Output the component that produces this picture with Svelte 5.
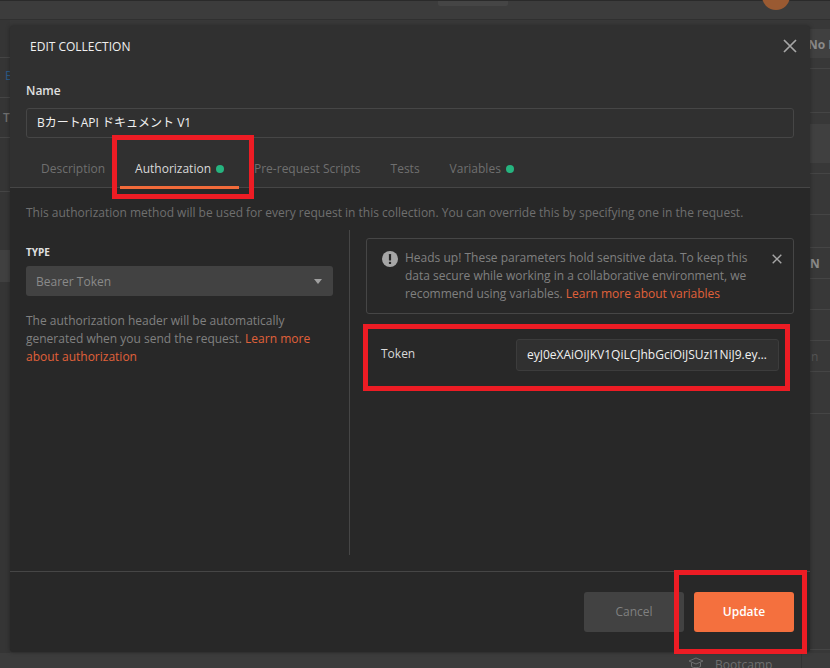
<script>
    const tabs = [
        { name: 'Description', dot: false },
        { name: 'Authorization', dot: true, active: true },
        { name: 'Pre-request Scripts', dot: false },
        { name: 'Tests', dot: false },
        { name: 'Variables', dot: true }
    ];

    // rows of the dimmed app that peek out beside the modal
    const leftRows = [
        { h: 38, line: true },
        { h: 40, line: true, text: 'B', cls: 'blue' },
        { h: 40, line: true, text: 'T', cls: 'tee' },
        { h: 54, line: true },
        { h: 58 },
        { h: 32, light: true }
    ];
    const rightRows = [
        { h: 9 },
        { h: 29, light: true, text: 'No E', cls: 'bold noe' },
        { h: 11, line: true },
        { h: 44, line: true },
        { h: 11 },
        { h: 39, light: true },
        { h: 11, line: true },
        { h: 41, line: true },
        { h: 33, line: true },
        { h: 31, line: true, text: 'N', cls: 'bold' },
        { h: 31, line: true },
        { h: 31, line: true },
        { h: 31, line: true, text: 'n', cls: 'dim' },
        { h: 42, line: true }
    ];
</script>

<div class="page">
    <!-- dimmed app behind the modal -->
    <div class="topbar">
        <div class="top-pill"></div>
        <div class="avatar"></div>
    </div>
    <div class="backdrop">
        <div class="strip left-strip">
            {#each leftRows as row}
                <div class="row {row.cls || ''}" class:line={row.line} class:light={row.light} style="height: {row.h}px">{row.text || ''}</div>
            {/each}
        </div>
        <div class="strip right-strip">
            {#each rightRows as row}
                <div class="row {row.cls || ''}" class:line={row.line} class:light={row.light} style="height: {row.h}px">{row.text || ''}</div>
            {/each}
            <div class="row line rest"></div>
        </div>
    </div>
    <div class="statusbar">
        <svg width="16" height="13" viewBox="0 0 16 13" fill="none" stroke="#6e6e6e" stroke-width="1">
            <path d="M8 1L1 4l7 3 7-3zM3.500 5.500v4c1.500 1.600 7.500 1.600 9 0v-4"/>
        </svg>
        <span>Bootcamp</span>
        <i></i>
    </div>

    <div class="modal">
        <header class="modal-header">
            <h1>EDIT COLLECTION</h1>
            <button class="close" aria-label="Close">
                <svg width="14" height="14" viewBox="0 0 14 14" fill="none" stroke="#a6a6a6" stroke-width="1.7">
                    <path d="M1 1l12 12M13 1L1 13"/>
                </svg>
            </button>
        </header>

        <div class="name-field">
            <label for="name">Name</label>
            <input id="name" value="BカートAPI ドキュメント V1" />
        </div>

        <nav class="tabs">
            {#each tabs as tab}
                <div class="tab" class:active={tab.active}>
                    {tab.name}
                    {#if tab.dot}<span class="dot"></span>{/if}
                </div>
            {/each}
        </nav>

        <div class="body">
            <p class="intro">This authorization method will be used for every request in this collection. You can override this by specifying one in the request.</p>
            <div class="columns">
                <div class="left">
                    <div class="type-label">TYPE</div>
                    <div class="select">
                        <span>Bearer Token</span>
                        <span class="caret"></span>
                    </div>
                    <p class="help">The authorization header will be automatically generated when you send the request. <a href="#auth">Learn more about authorization</a></p>
                </div>
                <div class="right">
                    <div class="alert">
                        <svg class="alert-icon" width="16" height="16" viewBox="0 0 16 16">
                            <circle cx="8" cy="8" r="8" fill="#a6a6a6"/>
                            <rect x="6.900" y="3" width="2.200" height="6.600" rx="0.600" fill="#282828"/>
                            <rect x="6.900" y="10.800" width="2.200" height="2.200" rx="0.600" fill="#282828"/>
                        </svg>
                        <p>Heads up! These parameters hold sensitive data. To keep this data secure while working in a collaborative environment, we recommend using variables. <a href="#vars">Learn more about variables</a></p>
                        <svg class="alert-close" width="10" height="10" viewBox="0 0 10 10" fill="none" stroke="#a6a6a6" stroke-width="1.400">
                            <path d="M.7.7l8.600 8.600M9.300.7L.7 9.300"/>
                        </svg>
                    </div>
                    <div class="token-row">
                        <span class="token-label">Token</span>
                        <div class="token-input">eyJ0eXAiOiJKV1QiLCJhbGciOiJSUzI1NiJ9.eyJhdWQiOiIxIiwianRpIjoi</div>
                    </div>
                </div>
            </div>
        </div>

        <footer class="modal-footer">
            <button class="btn cancel">Cancel</button>
            <button class="btn update">Update</button>
        </footer>
    </div>

    <!-- red annotation boxes -->
    <div class="mark mark-auth"></div>
    <div class="mark mark-token"></div>
    <div class="mark mark-update"></div>
</div>

<style>
    :global(body) {
        margin: 0;
        background: #3a3a3a;
        font-family: 'Open Sans', sans-serif;
        overflow: hidden;
    }

    .page {
        position: relative;
        display: flex;
        flex-direction: column;
        width: 830px;
        height: 668px;
        overflow: hidden;
        background: #383838;
    }

    .topbar {
        position: relative;
        flex: none;
        box-sizing: border-box;
        height: 20px;
        border-top: 1px solid #2a2a2a;
        border-bottom: 1px solid #303030;
        background: #3c3c3c;
    }

    .top-pill {
        position: absolute;
        left: 438px;
        top: 0;
        width: 70px;
        height: 5px;
        border-radius: 0 0 2px 2px;
        background: #454545;
    }

    .avatar {
        position: absolute;
        left: 762px;
        top: -19px;
        width: 28px;
        height: 28px;
        border-radius: 50%;
        background: #9a5a32;
    }

    .backdrop {
        flex: 1;
        display: flex;
        justify-content: space-between;
        min-height: 0;
    }

    .strip {
        display: flex;
        flex-direction: column;
        width: 20px;
        overflow: hidden;
    }

    .left-strip {
        width: 10px;
        background: #353535;
    }

    .row {
        flex: none;
        box-sizing: border-box;
        display: flex;
        align-items: center;
        white-space: nowrap;
        font-size: 12px;
        color: #6e6e6e;
    }

    .row.line { border-bottom: 1px solid #454545; }
    .row.light { background: #404040; }
    .row.rest { flex: 1; margin-bottom: 3px; }
    .row.bold { font-weight: 700; color: #8a8a8a; }
    .row.noe { margin-left: -2px; padding-top: 2px; }
    .row.dim { color: #555; padding-left: 1px; }
    .row.blue { color: #2b5a85; padding-left: 5px; padding-bottom: 4px; }
    .row.tee { color: #6e6e6e; padding-left: 3px; font-weight: 600; }

    .statusbar {
        flex: none;
        display: flex;
        align-items: flex-start;
        box-sizing: border-box;
        height: 15px;
        padding: 4px 0 0 688px;
        overflow: hidden;
        background: #3c3c3c;
        color: #6e6e6e;
        font-size: 12px;
        line-height: 16px;
    }

    .statusbar span {
        margin-left: 11px;
    }

    .statusbar i {
        margin-left: 29px;
        margin-top: -4px;
        width: 1px;
        height: 15px;
        background: #333;
    }

    .modal {
        position: absolute;
        left: 10px;
        top: 26px;
        width: 800px;
        height: 626px;
        display: flex;
        flex-direction: column;
        overflow: hidden;
        border-radius: 3px;
        background: #303030;
        box-shadow: 0 0 4px rgba(0, 0, 0, 0.35);
    }

    .modal-header {
        display: flex;
        align-items: center;
        justify-content: space-between;
        height: 40px;
        padding: 0 13px 0 20px;
    }

    h1 {
        margin: 0;
        font-size: 12px;
        font-weight: 500;
        color: #f0f0f0;
    }

    .close {
        display: flex;
        padding: 0;
        border: none;
        background: none;
        margin-bottom: 1px;
    }

    .name-field {
        display: flex;
        flex-direction: column;
        padding: 17px 16px 0;
    }

    label {
        font-size: 12px;
        font-weight: 600;
        line-height: 16px;
        color: #e0e0e0;
        margin-bottom: 9px;
    }

    input {
        box-sizing: border-box;
        height: 30px;
        padding: 0 10px 2px;
        border: 1px solid #464646;
        border-radius: 3px;
        background: #303030;
        color: #f0f0f0;
        font-family: 'Open Sans', 'Noto Sans CJK JP', sans-serif;
        font-size: 12px;
        outline: none;
    }

    .tabs {
        display: flex;
        gap: 30px;
        height: 50px;
        padding-left: 31px;
        border-bottom: 1px solid #464646;
        box-sizing: border-box;
    }

    .tab {
        position: relative;
        display: flex;
        align-items: center;
        gap: 5px;
        padding-top: 12px;
        height: 37px;
        font-size: 12px;
        color: #6f6f6f;
    }

    .tab.active {
        color: #d9d9d9;
        font-weight: 500;
    }

    .tab.active::after {
        content: '';
        position: absolute;
        left: -15px;
        right: -15px;
        bottom: -2px;
        height: 3px;
        background: #f26b3a;
    }

    .dot {
        width: 8px;
        height: 8px;
        border-radius: 50%;
        background: #26b47f;
    }

    .body {
        flex: 1;
        display: flex;
        flex-direction: column;
        min-height: 0;
        background: #282828;
    }

    .intro {
        margin: 0;
        padding: 16px 16px 0;
        font-size: 12px;
        line-height: 18px;
        color: #6f6f6f;
        white-space: nowrap;
    }

    .columns {
        display: flex;
        margin-top: 8px;
        height: 325px;
    }

    .left {
        box-sizing: border-box;
        width: 340px;
        padding: 15px 16px 0;
        border-right: 1px solid #464646;
    }

    .type-label {
        font-size: 10px;
        font-weight: 700;
        line-height: 14px;
        color: #e0e0e0;
        margin-bottom: 7px;
    }

    .select {
        display: flex;
        align-items: center;
        justify-content: space-between;
        box-sizing: border-box;
        height: 30px;
        width: 307px;
        padding: 0 10px;
        border-radius: 3px;
        background: #424242;
        color: #8a8a8a;
        font-size: 12px;
    }

    .caret {
        width: 0;
        height: 0;
        margin-right: 1px;
        border-left: 4px solid transparent;
        border-right: 4px solid transparent;
        border-top: 5px solid #a0a0a0;
    }

    .help {
        margin: 16px 0 0;
        width: 300px;
        font-size: 12px;
        line-height: 18px;
        color: #808080;
    }

    a {
        color: #e0613a;
        text-decoration: none;
    }

    .right {
        flex: 1;
        padding: 8px 16px 0;
    }

    .alert {
        display: flex;
        align-items: flex-start;
        box-sizing: border-box;
        height: 76px;
        padding: 10px 11px 0 15px;
        border: 1px solid #464646;
        border-radius: 3px;
    }

    .alert-icon {
        flex: none;
        margin: 2px 7px 0 0;
    }

    .alert p {
        flex: 1;
        margin: 0;
        font-size: 12px;
        line-height: 18px;
        color: #808080;
    }

    .alert-close {
        flex: none;
        margin-top: 5px;
        margin-left: 10px;
    }

    .token-row {
        display: flex;
        align-items: center;
        justify-content: space-between;
        margin-top: 25px;
        padding: 0 15px;
    }

    .token-label {
        font-size: 12px;
        font-weight: 500;
        color: #d9d9d9;
        margin-bottom: 3px;
    }

    .token-input {
        box-sizing: border-box;
        width: 263px;
        height: 32px;
        padding: 0 10px;
        border: 1px solid #3c3c3c;
        border-radius: 3px;
        background: #303030;
        color: #f0f0f0;
        font-size: 12px;
        line-height: 30px;
        white-space: nowrap;
        overflow: hidden;
        text-overflow: ellipsis;
    }

    .modal-footer {
        display: flex;
        justify-content: flex-end;
        gap: 10px;
        box-sizing: border-box;
        height: 81px;
        padding: 20px 16px 0;
        border-top: 1px solid #464646;
        background: #282828;
    }

    .btn {
        width: 100px;
        height: 40px;
        padding: 0 0 2px;
        border: none;
        border-radius: 3px;
        font-family: inherit;
        font-size: 12px;
        font-weight: 600;
    }

    .cancel {
        background: #424242;
        color: #808080;
        font-weight: 400;
    }

    .update {
        background: #f4703e;
        color: #fff;
    }

    .mark {
        position: absolute;
        box-sizing: border-box;
        border: 5px solid #ed1c24;
    }

    .mark-auth { left: 112px; top: 135px; width: 142px; height: 64px; }
    .mark-token { left: 363px; top: 324px; width: 427px; height: 67px; }
    .mark-update { left: 674px; top: 570px; width: 133px; height: 84px; }
</style>
